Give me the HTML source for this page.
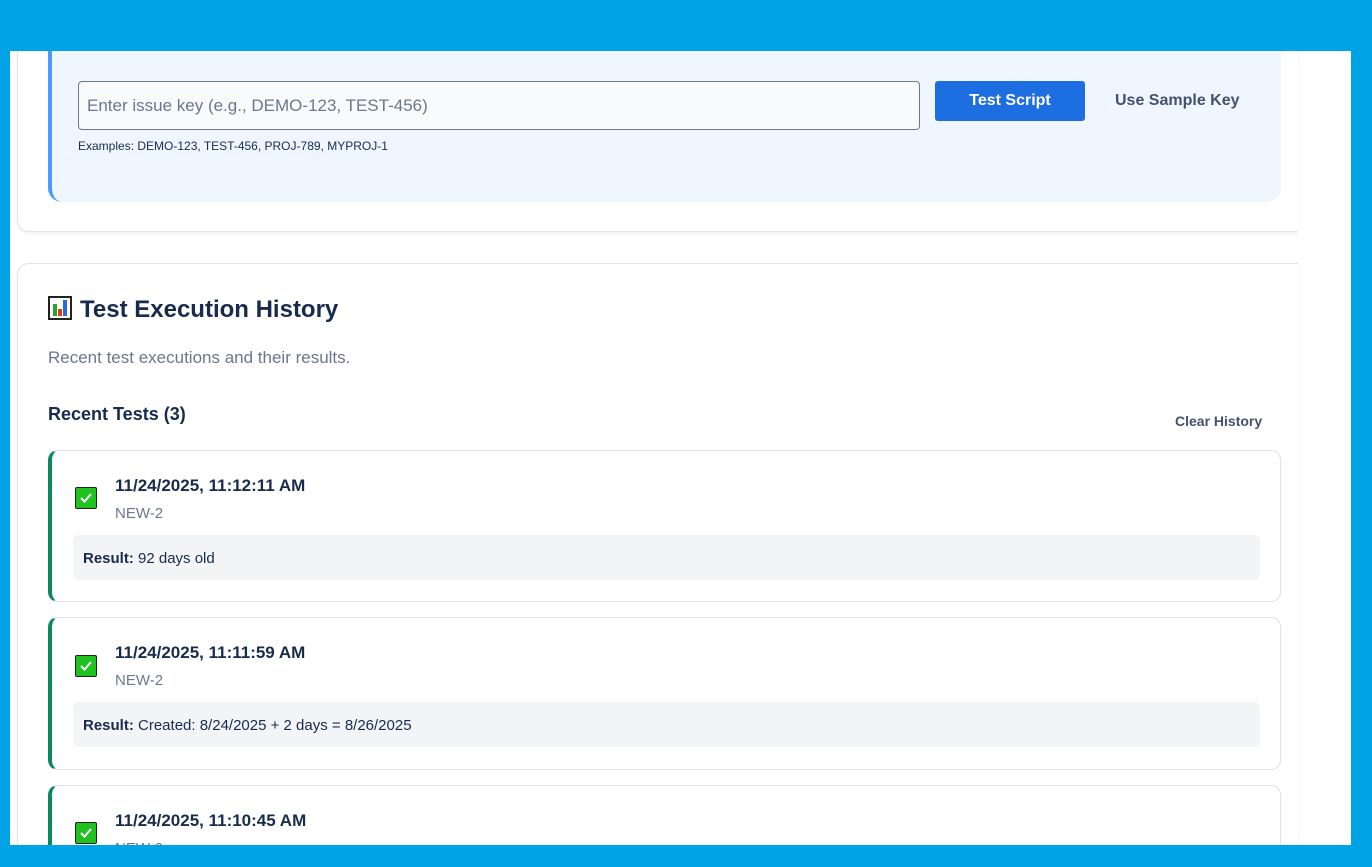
<!DOCTYPE html><html><head><style>
*{box-sizing:border-box;margin:0;padding:0}
html,body{width:1372px;height:867px;overflow:hidden}
body{background:#00a3e6;position:relative;font-family:"Liberation Sans",sans-serif;color:#172b4d}
.page{position:absolute;left:10px;top:51px;width:1341px;height:794px;background:#fff;overflow:hidden}
.a{position:absolute}
.card{position:absolute;left:7px;width:1281px;background:#fff;border:1px solid #e2e4e8;border-right:none;border-radius:12px 0 0 12px;box-shadow:0 2px 4px rgba(0,0,0,.06)}
.item{position:absolute;left:38px;width:1233px;border:1px solid #dfe1e6;border-left:4px solid #0a8a5c;border-radius:10px;background:#fff}
.chk{position:absolute;left:23px;width:22px;height:22px;background:#1fc21f;border:1.5px solid #222;border-radius:2px}
.chk svg{position:absolute;left:3px;top:3px}
.t{position:absolute;left:63px;font-size:17px;font-weight:bold;color:#172b4d}
.k{position:absolute;left:63px;font-size:15px;color:#6b778c}
.r{position:absolute;left:21px;width:1187px;height:45px;background:#f3f4f6;border-radius:6px;font-size:15px;padding:15px 10px;color:#172b4d}
</style></head><body>
<div class="page">
<div class="card" style="top:-60px;height:241px">
<div class="a" style="left:30px;top:40px;width:1233px;height:170px;background:#eff6ff;border-left:4px solid #4c9aff;border-radius:0 0 14px 14px"></div>
<div class="a" style="left:60px;top:89px;width:842px;height:49px;border:1px solid #6b778c;border-radius:4px;background:#f8fafc;font-size:17px;color:#6b778c;padding:14px 8px">Enter issue key (e.g., DEMO-123, TEST-456)</div>
<div class="a" style="left:60px;top:147px;font-size:12px;color:#172b4d">Examples: DEMO-123, TEST-456, PROJ-789, MYPROJ-1</div>
<div class="a" style="left:917px;top:89px;width:150px;height:40px;background:#1d6ee0;border-radius:3px;color:#fff;font-weight:bold;font-size:16px;text-align:center;line-height:40px">Test Script</div>
<div class="a" style="left:1097px;top:100px;font-size:16px;font-weight:bold;color:#42526e">Use Sample Key</div>
</div>
<div class="card" style="top:212px;height:700px">
<div class="a" style="left:30px;top:32px;font-size:24px;font-weight:bold;color:#172b4d"><span style="display:inline-block;width:24px;height:24px;border:2px solid #222;background:#fff;vertical-align:-3px;position:relative;margin-right:8px"><i style="position:absolute;left:3px;bottom:2px;width:4px;height:12px;background:#2aa52a"></i><i style="position:absolute;left:8px;bottom:2px;width:4px;height:7px;background:#e03a1a"></i><i style="position:absolute;left:13px;bottom:2px;width:4px;height:16px;background:#2a6ae0"></i></span>Test Execution History</div>
<div class="a" style="left:30px;top:84px;font-size:17px;color:#6b778c">Recent test executions and their results.</div>
<div class="a" style="left:30px;top:140px;font-size:18px;font-weight:bold">Recent Tests (3)</div>
<div class="a" style="left:1157px;top:149px;font-size:14px;font-weight:bold;color:#42526e">Clear History</div>
</div>
<div class="item" style="top:399px;height:152px">
<div class="chk" style="top:36px"><svg width="14" height="14"><path d="M2 7l3.5 3.5L12 3" stroke="#fff" stroke-width="2" fill="none"/></svg></div>
<div class="t" style="top:25px">11/24/2025, 11:12:11 AM</div>
<div class="k" style="top:54px">NEW-2</div>
<div class="r" style="top:84px"><b>Result:</b> 92 days old</div></div>
<div class="item" style="top:566px;height:153px">
<div class="chk" style="top:37px"><svg width="14" height="14"><path d="M2 7l3.5 3.5L12 3" stroke="#fff" stroke-width="2" fill="none"/></svg></div>
<div class="t" style="top:25px">11/24/2025, 11:11:59 AM</div>
<div class="k" style="top:54px">NEW-2</div>
<div class="r" style="top:84px"><b>Result:</b> Created: 8/24/2025 + 2 days = 8/26/2025</div></div>
<div class="item" style="top:734px;height:80px">
<div class="chk" style="top:36px"><svg width="14" height="14"><path d="M2 7l3.5 3.5L12 3" stroke="#fff" stroke-width="2" fill="none"/></svg></div>
<div class="t" style="top:25px">11/24/2025, 11:10:45 AM</div>
<div class="k" style="top:54px">NEW-2</div></div>
</div>
</body></html>
